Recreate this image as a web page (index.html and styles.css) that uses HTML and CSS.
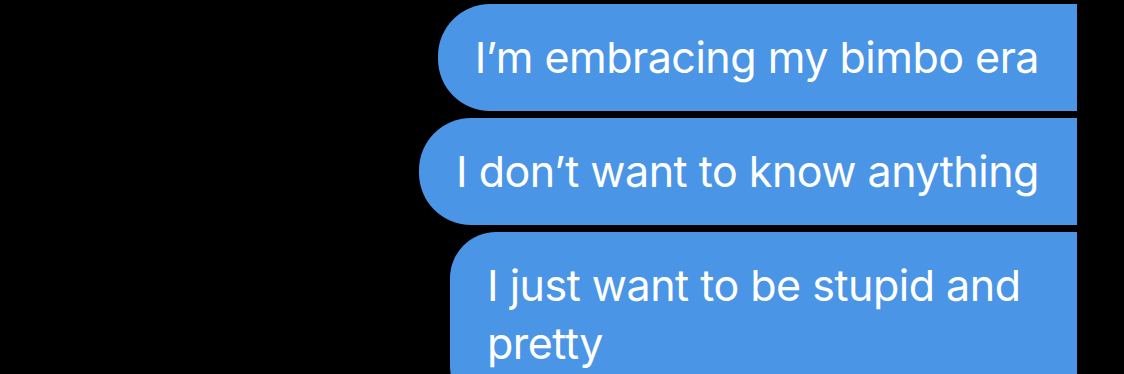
FILE: index.html
```html
<!DOCTYPE html>
<html>
<head>
<meta charset="utf-8">
<link rel="stylesheet" href="styles.css">
</head>
<body>
<div class="thread">
  <div class="bubble">I’m embracing my bimbo era</div>
  <div class="bubble">I don’t want to know anything</div>
  <div class="bubble bubble-tall">I just want to be stupid and pretty</div>
</div>
</body>
</html>
```
FILE: styles.css
```css
html, body {
  margin: 0;
  padding: 0;
  background: #000;
  height: 374px;
  overflow: hidden;
}
.thread {
  display: flex;
  flex-direction: column;
  align-items: flex-end;
  gap: 7px;
  padding: 4px 47px 0 0;
}
.bubble {
  background: #4a95e6;
  color: #fff;
  font-family: Inter, "Noto Sans", sans-serif;
  font-size: 43px;
  line-height: 58px;
  padding: 24px 38px 25px 37px;
  border-radius: 52px 0 0 52px;
  max-width: 600px;
  letter-spacing: -0.5px;
}
.bubble-tall {
  width: 552px;
  border-radius: 46px 0 0 46px;
  padding-bottom: 40px;
}
```
